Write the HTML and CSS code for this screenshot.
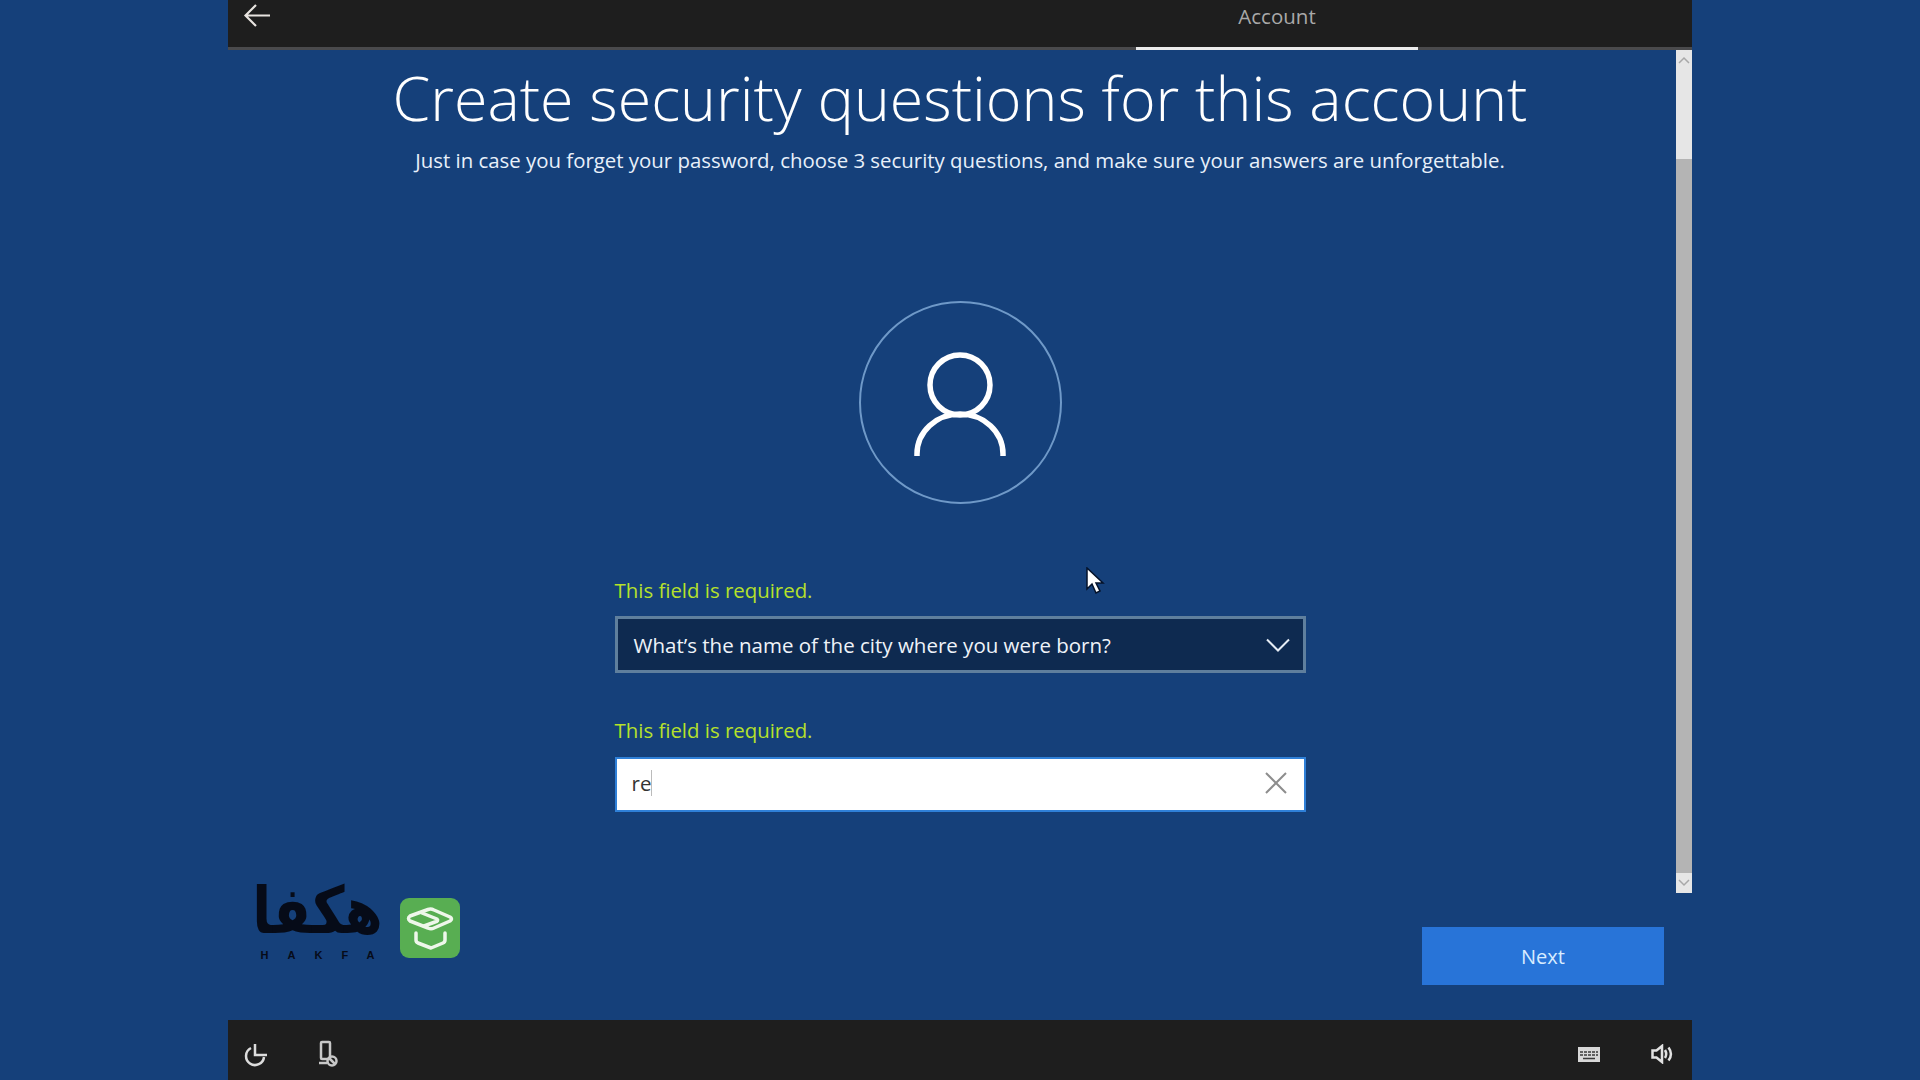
FILE: index.html
```html
<!DOCTYPE html>
<html lang="en">
<head>
<meta charset="utf-8">
<title>Account</title>
<link rel="stylesheet" href="styles.css">
</head>
<body>
<div class="window">
  <header class="topbar">
    <button class="back" aria-label="Back">
      <svg width="28" height="24" viewBox="0 0 28 24"><path d="M13 2 2.500 12.500 13 23M3 12.500h24" fill="none" stroke="#e8e4e0" stroke-width="2.200"/></svg>
    </button>
    <div class="tab">Account</div>
  </header>
  <div class="body">
    <main class="content">
      <h1 class="title">Create security questions for this account</h1>
      <p class="subtitle">Just in case you forget your password, choose 3 security questions, and make sure your answers are unforgettable.</p>
      <div class="avatar">
        <svg width="92" height="104" viewBox="0 0 92 104"><circle cx="46" cy="33" r="30" fill="none" stroke="#fff" stroke-width="5.500"/><path d="M3 104V102C3 80 22 62 46 62S89 80 89 102V104" fill="none" stroke="#fff" stroke-width="5.500"/></svg>
      </div>
      <div class="form">
        <div class="field first">
          <div class="error">This field is required.</div>
          <div class="select">
            <span>What’s the name of the city where you were born?</span>
            <svg width="24" height="14" viewBox="0 0 24 14"><path d="M1 1.500 12 12.500 23 1.500" fill="none" stroke="#e6edf5" stroke-width="2"/></svg>
          </div>
        </div>
        <div class="field">
          <div class="error">This field is required.</div>
          <div class="input">
            <span class="value">re</span><span class="caret"></span>
            <svg class="clear" width="24" height="24" viewBox="0 0 24 24"><path d="M2 2 22 22M22 2 2 22" fill="none" stroke="#8d8d8d" stroke-width="2"/></svg>
          </div>
        </div>
      </div>
    </main>
    <div class="scrollbar">
      <div class="arrow"><svg width="12" height="8" viewBox="0 0 12 8"><path d="M1 7 6 2l5 5" fill="none" stroke="#a8a8a8" stroke-width="1.500"/></svg></div>
      <div class="thumb-gap"></div>
      <div class="thumb"></div>
      <div class="arrow"><svg width="12" height="8" viewBox="0 0 12 8"><path d="M1 1l5 5 5-5" fill="none" stroke="#a8a8a8" stroke-width="1.500"/></svg></div>
    </div>
    <div class="actions"><button class="next">Next</button></div>
    <div class="logo">
      <div class="wordmark">
        <div class="arabic" lang="fa" dir="rtl">هکفا</div>
        <div class="latin">HAKFA</div>
      </div>
      <div class="badge">
        <svg width="60" height="60" viewBox="0 0 60 60"><g fill="none" stroke="#eef7ea" stroke-width="3.500" stroke-linejoin="round" stroke-linecap="round"><path d="M10 18 28 11.500Q31 10.500 34 12L50 19Q53 21 50 23L34 30Q31 31.500 28 30L10 23Q7 20.500 10 18Z"/><path d="M22 15 37 21Q39 23 35 24L24 28"/><path d="M16 35V42Q16 44 18 45L31 50 43 45Q45 44 45 42V35"/></g></svg>
      </div>
    </div>
    <svg class="cursor" width="20" height="28" viewBox="0 0 20 28"><path d="M2 1v21l5-5 4 9 4-2-4-8h7Z" fill="#fff" stroke="#04122a" stroke-width="1.500"/></svg>
  </div>
  <footer class="bottombar">
    <div class="group">
      <svg class="ico" width="26" height="26" viewBox="0 0 26 26"><g fill="none" stroke="#dcdcdc" stroke-width="2.500"><path d="M8 7A9 9 0 1 0 21 16"/><path d="M12 3v11h12"/></g></svg>
      <svg class="ico" width="26" height="28" viewBox="0 0 26 28"><g fill="none" stroke="#c8c8c8" stroke-width="2.500"><rect x="7" y="2" width="9" height="17" rx="1"/><path d="M5 23h8"/><circle cx="18" cy="21" r="4.500"/><path d="M15 18l6 6"/></g></svg>
    </div>
    <div class="group right">
      <svg class="ico" width="22" height="15" viewBox="0 0 22 15"><rect width="22" height="15" fill="#d8d8d8"/><path d="M2 5h18M2 8h18" stroke="#3a3a3a" stroke-width="1.500" stroke-dasharray="3 1"/><path d="M5 11.500h12" stroke="#3a3a3a" stroke-width="1.500"/></svg>
      <svg class="ico" width="22" height="20" viewBox="0 0 22 20"><g fill="none" stroke="#e2e2e2" stroke-width="2.500"><path d="M1.500 6.500h4L11 2v16l-5.500-4.500h-4Z"/><path d="M14 6c1.500 2.500 1.500 5.500 0 8"/><path d="M17.500 3.500c3 4 3 9 0 13"/></g></svg>
    </div>
  </footer>
</div>
</body>
</html>
```
FILE: styles.css
```css
* { box-sizing: border-box; }
html, body { margin: 0; height: 100%; }
body {
  background: #15407a;
  font-family: "Open Sans", "Noto Sans", sans-serif;
  overflow: hidden;
}
.window {
  width: 1464px;
  height: 1080px;
  margin: 0 auto;
  display: flex;
  flex-direction: column;
}
.topbar {
  height: 50px;
  flex: none;
  background: #1e1e1e;
  border-bottom: 3px solid #4a4a4c;
  display: flex;
  position: relative;
  padding: 3px 0 0 15px;
}
.back {
  background: none;
  border: 0;
  padding: 0;
  height: 30px;
  width: 28px;
  display: flex;
}
.tab {
  width: 282px;
  margin: -3px 0 0 865px;
  height: 50px;
  border-bottom: 3px solid #ececec;
  color: #a9a9a9;
  font-size: 20.500px;
  line-height: 33px;
  text-align: center;
}
.body {
  flex: 1;
  position: relative;
  display: flex;
  min-height: 0;
}
.content {
  flex: 1;
  display: flex;
  flex-direction: column;
  align-items: center;
  padding: 9px 0 0 16px;
  min-width: 0;
}
.title {
  margin: 0;
  font-size: 60.900px;
  font-weight: 300;
  line-height: 78px;
  color: #fff;
  white-space: nowrap;
}
.subtitle {
  margin: 9px 0 0;
  font-size: 20.400px;
  line-height: 28px;
  color: #e8f0fa;
  white-space: nowrap;
}
.avatar {
  width: 203px;
  height: 203px;
  margin-top: 127px;
  border: 2px solid #6f99c8;
  border-radius: 50%;
  display: flex;
  align-items: center;
  justify-content: center;
}
.avatar svg { margin-top: 3px; }
.form { width: 691px; margin-top: 72px; }
.field { display: flex; flex-direction: column; margin-top: 43px; }
.field.first { margin-top: 0; }
.error {
  color: #b6e12a;
  font-size: 20.400px;
  line-height: 28px;
  margin-bottom: 12px;
}
.select {
  height: 57px;
  background: #0e2a50;
  border: 3px solid #5f7f9d;
  color: #eef3f9;
  font-size: 20.500px;
  display: flex;
  align-items: center;
  justify-content: space-between;
  padding: 0 13px 0 16px;
}
.input {
  height: 55px;
  margin-top: 1px;
  background: #fff;
  border: 2px solid #2f80d8;
  color: #333;
  font-size: 20.500px;
  display: flex;
  align-items: center;
  padding: 0 16px 3px 15px;
}
.caret { width: 1px; height: 26px; background: #bbb; }
.clear { margin-left: auto; }
.scrollbar {
  width: 16px;
  flex: none;
  height: 843px;
  display: flex;
  flex-direction: column;
  background: #e6e6e6;
}
.arrow {
  height: 20px;
  flex: none;
  display: flex;
  align-items: center;
  justify-content: center;
}
.thumb-gap { height: 89px; flex: none; }
.thumb { flex: 1; background: #b4b4b4; }
.actions {
  position: absolute;
  right: 28px;
  top: 877px;
}
.next {
  width: 242px;
  height: 58px;
  background: #2874d8;
  border: 0;
  color: #d8ecff;
  font-family: inherit;
  font-size: 20px;
}
.logo {
  position: absolute;
  left: 27px;
  top: 838px;
  height: 74px;
  display: flex;
  align-items: flex-start;
  gap: 20px;
}
.wordmark { width: 125px; color: #060b18; text-align: center; }
.arabic {
  font-family: "DejaVu Sans", sans-serif;
  font-weight: 700;
  font-size: 52px;
  line-height: 60px;
  transform-origin: 50% 100%;
  transform: scale(1.06, 1.25);
}
.latin {
  font-family: "Liberation Sans", sans-serif;
  font-weight: 700;
  font-size: 11px;
  letter-spacing: 19px;
  margin-right: -19px;
  line-height: 14px;
}
.badge {
  width: 60px;
  height: 60px;
  margin-top: 10px;
  background: #58ae52;
  border-radius: 9px;
  display: flex;
  align-items: center;
  justify-content: center;
}
.cursor { position: absolute; left: 857px; top: 517px; }
.bottombar {
  height: 60px;
  flex: none;
  background: #1e1e1e;
  display: flex;
  align-items: center;
  justify-content: space-between;
  padding: 8px 19px 0 15px;
}
.group { display: flex; align-items: center; gap: 45px; }
.group.right { gap: 51px; }
```
